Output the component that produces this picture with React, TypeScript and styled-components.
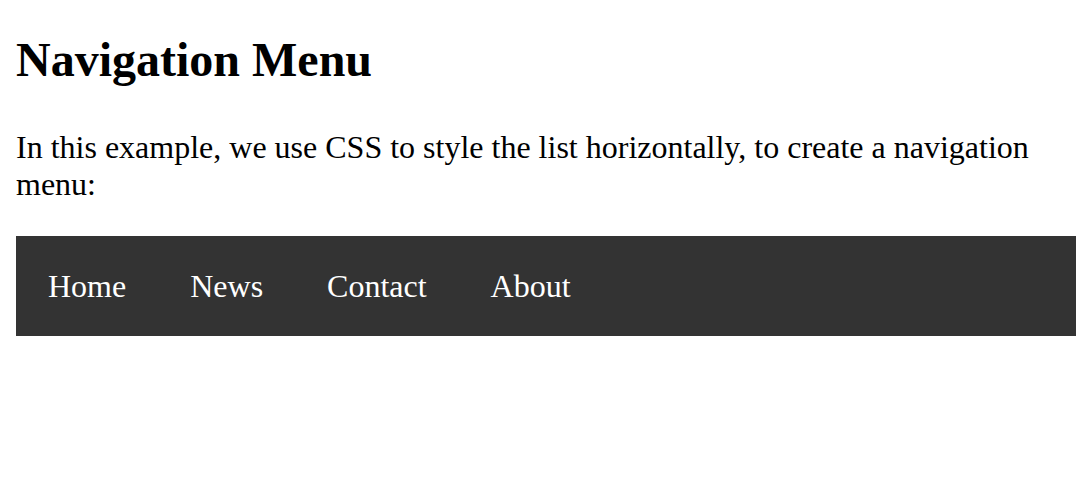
import React from "react";
import styled, { createGlobalStyle } from "styled-components";

const GlobalStyle = createGlobalStyle`
  html, body { margin: 0; padding: 0; background: #ffffff; }
  body {
    margin: 16px;
    font-family: "Liberation Serif", "Times New Roman", serif;
    font-size: 32px;
    color: #000000;
  }
`;

const Title = styled.h1`
  font-size: 48px;
  font-weight: bold;
  margin: 16px 0 42px;
`;

const Text = styled.p`
  margin: 0 0 33px;
`;

const NavList = styled.ul`
  list-style: none;
  margin: 0;
  padding: 0;
  background: #333333;
  display: flex;
`;

const NavItem = styled.li``;

const NavLink = styled.a`
  display: block;
  color: #ffffff;
  text-align: center;
  padding: 32px 32px;
  line-height: 36px;
  text-decoration: none;
`;

const items = ["Home", "News", "Contact", "About"];

export default function App() {
  return (
    <>
      <GlobalStyle />
      <Title>Navigation Menu</Title>
      <Text>
        In this example, we use CSS to style the list horizontally, to create a navigation menu:
      </Text>
      <NavList>
        {items.map((item) => (
          <NavItem key={item}>
            <NavLink href={`#${item.toLowerCase()}`}>{item}</NavLink>
          </NavItem>
        ))}
      </NavList>
    </>
  );
}
